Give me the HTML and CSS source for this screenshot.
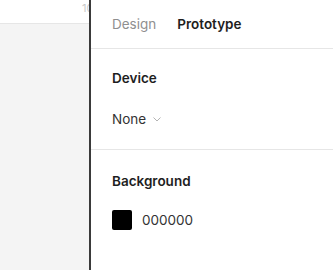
FILE: index.html
```html
<!DOCTYPE html>
<html lang="en">
<head>
    <meta charset="UTF-8">
    <meta name="viewport" content="width=device-width, initial-scale=1.0">
    <title>Prototype</title>
    <link rel="stylesheet" href="styles.css">
</head>
<body>
    <div class="app">
        <div class="canvas-area">
            <div class="ruler"><span class="ruler-mark">10</span></div>
            <div class="canvas"></div>
        </div>
        <aside class="panel">
            <div class="tabs">
                <span class="tab">Design</span>
                <span class="tab active">Prototype</span>
            </div>
            <div class="section device">
                <h3 class="section-title">Device</h3>
                <div class="select">
                    <span>None</span>
                    <svg class="chevron" width="8" height="5" viewBox="0 0 8 5">
                        <path d="M0.5 0.5 L4 4 L7.5 0.5" fill="none" stroke="#b3b3b3" stroke-width="1"/>
                    </svg>
                </div>
            </div>
            <div class="section background">
                <h3 class="section-title">Background</h3>
                <div class="color-row">
                    <span class="swatch"></span>
                    <span class="hex">000000</span>
                </div>
            </div>
        </aside>
    </div>
</body>
</html>
```

FILE: styles.css
```css
body {
    margin: 0;
    font-family: Inter, "Noto Sans", sans-serif;
    font-size: 13.5px;
    color: #1e1e1e;
}
.app {
    display: flex;
    height: 270px;
    overflow: hidden;
}
.canvas-area {
    width: 89px;
    display: flex;
    flex-direction: column;
    overflow: hidden;
}
.ruler {
    height: 23px;
    background-color: #fff;
    border-bottom: 1px solid #e6e6e6;
    position: relative;
    overflow: hidden;
}
.ruler-mark {
    position: absolute;
    left: 82px;
    top: 1px;
    font-size: 11px;
    color: #c8c8c8;
}
.canvas {
    flex: 1;
    background-color: #f4f4f4;
}
.panel {
    flex: 1;
    border-left: 2px solid #3a3a3a;
    background-color: #fff;
}
.tabs {
    height: 48px;
    display: flex;
    align-items: center;
    gap: 21px;
    padding-left: 21px;
    border-bottom: 1px solid #e6e6e6;
}
.tab {
    color: #8f8f8f;
    line-height: 16px;
}
.tab.active {
    color: #1e1e1e;
    font-weight: 600;
}
.section {
    padding-left: 21px;
}
.section-title {
    margin: 0;
    font-size: 13.5px;
    font-weight: 600;
    line-height: 16px;
}
.device {
    padding-top: 21px;
    padding-bottom: 22px;
    border-bottom: 1px solid #e6e6e6;
}
.select {
    margin-top: 25px;
    display: flex;
    align-items: center;
    gap: 7px;
    line-height: 16px;
    color: #333;
}
.chevron {
    margin-top: 1px;
}
.background {
    padding-top: 23px;
}
.color-row {
    margin-top: 21px;
    display: flex;
    align-items: center;
    gap: 10px;
}
.swatch {
    width: 20px;
    height: 20px;
    background-color: #000;
    border-radius: 2px;
}
.hex {
    color: #333;
}
```
